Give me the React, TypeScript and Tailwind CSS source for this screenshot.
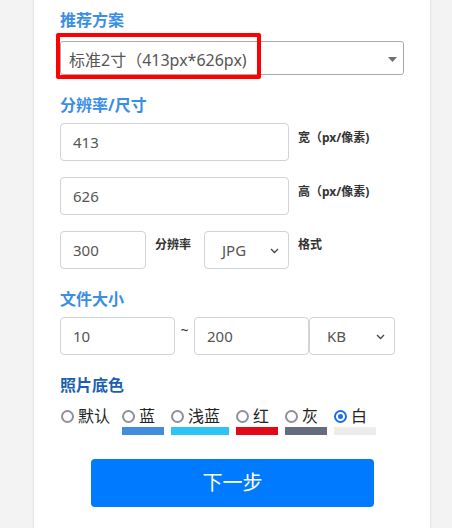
import React from "react";

const font = { fontFamily: "'Noto Sans', 'Noto Sans CJK SC', sans-serif" };

function Chevron() {
  return (
    <svg width="9" height="6" viewBox="0 0 9 6" className="absolute right-[9px] top-[16px]">
      <polyline points="1,1 4.5,4.5 8,1" fill="none" stroke="#444" strokeWidth="1.3" />
    </svg>
  );
}

function Radio({ checked }: { checked?: boolean }) {
  if (checked)
    return (
      <span className="w-[13px] h-[13px] rounded-full border-2 border-[#1a6fe6] flex items-center justify-center shrink-0">
        <span className="w-[5px] h-[5px] rounded-full bg-[#1a6fe6]" />
      </span>
    );
  return <span className="w-[13px] h-[13px] rounded-full border-2 border-[#8f8f9d] shrink-0" />;
}

const colors = [
  { name: "默认", w: "w-[54px]", bar: "" },
  { name: "蓝", w: "w-[42px]", bar: "bg-[#438edb]" },
  { name: "浅蓝", w: "w-[58px]", bar: "bg-[#2ec3f5]" },
  { name: "红", w: "w-[42px]", bar: "bg-[#e20a16]" },
  { name: "灰", w: "w-[42px]", bar: "bg-[#666b7d]" },
  { name: "白", w: "w-[42px]", bar: "bg-[#ececec]", checked: true },
];

export default function App() {
  return (
    <div className="w-[452px] h-[528px] overflow-hidden bg-[#f3f3f3]" style={font}>
      <div className="relative ml-[34px] w-[396px] h-[528px] bg-white shadow-[0_0_2px_rgba(0,0,0,0.18)] pl-[26px] pt-[8px]">
        <div className="h-[24px] leading-[24px] text-[16px] font-bold text-[#3a8ee6]">推荐方案</div>
        <div className="relative mt-[9px] w-[344px] h-[34px] border border-[#a9a9a9] rounded-[3px] flex items-center pl-[8px] text-[16px] text-[#555]">
          <span className="mt-[3px]">标准2寸（413px*626px)</span>
          <svg width="9" height="5" viewBox="0 0 9 5" className="absolute right-[6px] top-[15px]">
            <polygon points="0,0 9,0 4.5,5" fill="#6e6e6e" />
          </svg>
        </div>
        <div className="absolute left-[22px] top-[33px] w-[205px] h-[46px] border-[4px] border-[#ff0000] rounded-[2px]" />

        <div className="mt-[18px] h-[24px] leading-[24px] text-[16px] font-bold text-[#3a8ee6]">分辨率/尺寸</div>
        <div className="mt-[6px] flex">
          <div className="w-[229px] h-[38px] border border-[#ced4da] rounded-[4px] pl-[12px] flex items-center text-[15px] text-[#555]">413</div>
          <div className="ml-[9px] mt-[6px] text-[12px] leading-[18px] font-bold text-[#333]">宽（px/像素)</div>
        </div>
        <div className="mt-[16px] flex">
          <div className="w-[229px] h-[38px] border border-[#ced4da] rounded-[4px] pl-[12px] flex items-center text-[15px] text-[#555]">626</div>
          <div className="ml-[9px] mt-[6px] text-[12px] leading-[18px] font-bold text-[#333]">高（px/像素)</div>
        </div>
        <div className="mt-[16px] flex">
          <div className="w-[86px] h-[38px] border border-[#ced4da] rounded-[4px] pl-[12px] flex items-center text-[15px] text-[#555]">300</div>
          <div className="ml-[9px] w-[49px] mt-[5px] text-[12px] leading-[18px] font-bold text-[#333]">分辨率</div>
          <div className="relative w-[85px] h-[38px] border border-[#ced4da] rounded-[4px] pl-[17px] flex items-center text-[15px] text-[#555]">
            JPG
            <Chevron />
          </div>
          <div className="ml-[9px] mt-[5px] text-[12px] leading-[18px] font-bold text-[#333]">格式</div>
        </div>

        <div className="mt-[18px] h-[24px] leading-[24px] text-[16px] font-bold text-[#3a8ee6]">文件大小</div>
        <div className="mt-[6px] flex">
          <div className="w-[115px] h-[38px] border border-[#ced4da] rounded-[4px] pl-[12px] flex items-center text-[15px] text-[#555]">10</div>
          <div className="w-[19px] text-center text-[14px] leading-[18px] pt-[4px] text-[#333]">~</div>
          <div className="w-[115px] h-[38px] border border-[#ced4da] rounded-[4px] pl-[12px] flex items-center text-[15px] text-[#555]">200</div>
          <div className="relative w-[86px] h-[38px] border border-[#ced4da] rounded-[4px] pl-[17px] flex items-center text-[15px] text-[#555]">
            KB
            <Chevron />
          </div>
        </div>

        <div className="mt-[18px] h-[24px] leading-[24px] text-[16px] font-bold text-[#1a5fb0]">照片底色</div>
        <div className="mt-[8px] ml-[1px] flex gap-[7px]">
          {colors.map((c) => (
            <div key={c.name} className={`${c.w} flex flex-col`}>
              <div className="h-[22px] flex items-center gap-[4px] text-[16px] leading-[22px] text-[#222]">
                <Radio checked={c.checked} />
                <span>{c.name}</span>
              </div>
              <div className={`h-[8px] ${c.bar}`} />
            </div>
          ))}
        </div>

        <div className="mt-[24px] ml-[31px] w-[283px] h-[48px] rounded-[4px] bg-[#007bff] flex items-center justify-center text-white text-[20px]">
          下一步
        </div>
      </div>
    </div>
  );
}
